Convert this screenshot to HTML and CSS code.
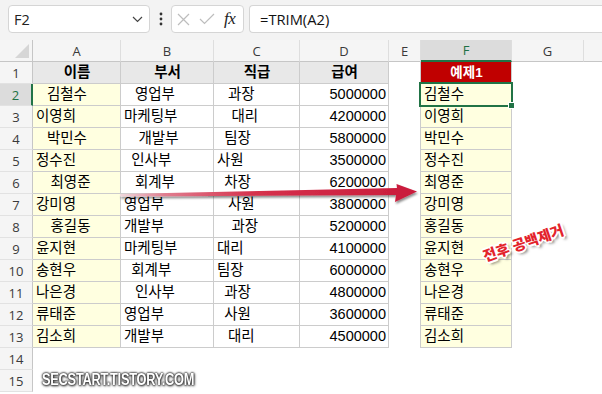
FILE: index.html
```html
<!DOCTYPE html>
<html lang="ko">
<head>
  <meta charset="UTF-8">
  <meta name="viewport" content="width=device-width, initial-scale=1">
  <title>TRIM 함수 예제</title>
  <link rel="stylesheet" href="styles.css">
</head>
<body>
  <!-- 이름 상자 + 수식 입력줄 -->
  <div class="toolbar">
    <div class="namebox">
      <span>F2</span>
      <svg width="11" height="7" viewBox="0 0 11 7"><path d="M1 1 L5.5 5.5 L10 1" fill="none" stroke="#444" stroke-width="1.2"/></svg>
    </div>
    <div class="dots">
      <svg width="4" height="14" viewBox="0 0 4 14"><circle cx="2" cy="2" r="1.4"/><circle cx="2" cy="7" r="1.4"/><circle cx="2" cy="12" r="1.4"/></svg>
    </div>
    <div class="fxbox">
      <svg class="ic-x" width="13" height="13" viewBox="0 0 13 13"><path d="M1 1 L12 12 M12 1 L1 12" stroke="#bdbdbd" stroke-width="1.2"/></svg>
      <svg class="ic-ok" width="16" height="12" viewBox="0 0 16 12"><path d="M1 6 L5.5 10.5 L15 1" fill="none" stroke="#bdbdbd" stroke-width="1.2"/></svg>
      <span class="fx">fx</span>
    </div>
    <div class="formula">=TRIM(A2)</div>
  </div>

  <!-- 시트 -->
  <div class="sheet" id="sheet">
    <div class="corner"></div>
    <div class="ch">A</div>
    <div class="ch">B</div>
    <div class="ch">C</div>
    <div class="ch">D</div>
    <div class="ch">E</div>
    <div class="ch on">F</div>
    <div class="ch">G</div>
    <div class="ch last"></div>

    <div class="rh">1</div>
    <div class="c b th">이름</div>
    <div class="c b th">부서</div>
    <div class="c b th">직급</div>
    <div class="c b th">급여</div>
    <div class="c e"></div>
    <div class="c f red">예제1</div>
    <div class="c"></div>
    <div class="c"></div>
  </div>

  <!-- 화살표, 메모, 워터마크 -->
  <svg class="overlay" width="602" height="394" viewBox="0 0 602 394">
    <defs>
      <linearGradient id="flecha" x1="120" y1="0" x2="418" y2="0" gradientUnits="userSpaceOnUse">
        <stop offset="0" stop-color="#efd9dd"/>
        <stop offset="0.15" stop-color="#e07d8f"/>
        <stop offset="0.45" stop-color="#d5314c"/>
        <stop offset="1" stop-color="#c91b3b"/>
      </linearGradient>
      <filter id="sombra" x="-5%" y="-50%" width="110%" height="200%">
        <feDropShadow dx="1" dy="2" stdDeviation="1.2" flood-color="#000" flood-opacity="0.45"/>
      </filter>
    </defs>
    <polygon points="120,194 397,188 396.5,184 417,191.5 395,202 396,195 120,196.5" fill="url(#flecha)" filter="url(#sombra)"/>
  </svg>
  <div class="note">전후 공백제거</div>
  <div class="mark">SECSTART.TISTORY.COM</div>

  <script>
    // 앞뒤에 공백이 섞인 원본 데이터
    const datos = [
      ["   김철수", "   영업부", "   과장", 5000000],
      ["이영희", "마케팅부", "    대리", 4200000],
      ["   박민수", "    개발부", "  팀장", 5800000],
      ["정수진", "  인사부", "사원", 3500000],
      ["    최영준", "   회계부", "  차장", 6200000],
      ["강미영", "영업부", "   사원", 3800000],
      ["    홍길동", "개발부", "    과장", 5200000],
      ["윤지현", "마케팅부", "대리", 4100000],
      ["송현우", "  회계부", "팀장", 6000000],
      ["나은경", "   인사부", "  과장", 4800000],
      ["류태준", "영업부", "  사원", 3600000],
      ["김소희", "개발부", "   대리", 4500000]
    ];

    const sheet = document.getElementById("sheet");

    datos.forEach((r, i) => {
      const n = i + 2;
      const on = n === 2;
      sheet.insertAdjacentHTML("beforeend",
        `<div class="rh${on ? " on" : ""}">${n}</div>` +
        `<div class="c b y">${r[0]}</div>` +
        `<div class="c b">${r[1]}</div>` +
        `<div class="c b">${r[2]}</div>` +
        `<div class="c b num">${r[3]}</div>` +
        `<div class="c e"></div>` +
        `<div class="c f y${on ? " sel" : ""}">${r[0].trim()}</div>` +
        `<div class="c"></div><div class="c"></div>`);
    });

    // 빈 행
    for (let n = 14; n <= 15; n++) {
      sheet.insertAdjacentHTML("beforeend",
        `<div class="rh">${n}</div>` + `<div class="c"></div>`.repeat(8));
    }
  </script>
</body>
</html>
```

FILE: styles.css
```css
/* ----- 기본 ----- */
html, body {
  height: 394px;
  overflow: hidden;
}

body {
  margin: 0;
  background: #f3f3f3;
  font-family: "Liberation Sans", "Noto Sans CJK KR", sans-serif;
  color: #000;
  position: relative;
}

/* ----- 수식 입력줄 ----- */
.toolbar {
  display: flex;
  align-items: center;
  height: 40px;
  box-sizing: border-box;
  padding: 5px 0 7px 8px;
}

.namebox, .fxbox, .formula {
  height: 28px;
  box-sizing: border-box;
  background: #fff;
  border: 1px solid #d5d5d5;
  border-radius: 4px;
  display: flex;
  align-items: center;
}

.namebox {
  width: 142px;
  justify-content: space-between;
  padding: 0 6px 0 5px;
  font: 14.5px "Open Sans", sans-serif;
  color: #222;
}

.dots {
  width: 21px;
  display: flex;
  justify-content: center;
  fill: #333;
}

.fxbox {
  width: 73px;
  padding-left: 5px;
}

.ic-x { margin-right: 9px; }
.ic-ok { margin-right: 9px; }

.fx {
  font: italic 17px "Liberation Serif", serif;
  color: #222;
  letter-spacing: -0.5px;
}

.formula {
  flex: 1;
  margin-left: 5px;
  border-right: none;
  border-radius: 4px 0 0 4px;
  padding-left: 10px;
  font: 14.7px "Open Sans", sans-serif;
  color: #111;
}

/* ----- 시트 ----- */
.sheet {
  display: grid;
  grid-template-columns: 33px 88px 93px 86px 89px 32px 91px 72px 1fr;
  grid-auto-rows: 22px;
  background: #fff;
  height: 354px;
}

.sheet > div {
  box-sizing: border-box;
}

.corner, .ch, .rh {
  background: #f5f5f5;
  font: 13px "Open Sans", sans-serif;
  color: #3a3a3a;
  display: flex;
  align-items: center;
  justify-content: center;
}

.corner {
  border-right: 1px solid #c6c6c6;
  border-bottom: 1px solid #c6c6c6;
  position: relative;
}

.corner::after {
  content: "";
  position: absolute;
  right: 3px;
  bottom: 3px;
  border-left: 14px solid transparent;
  border-bottom: 14px solid #d6d6d6;
}

.ch {
  border-right: 1px solid #dedede;
  border-bottom: 1px solid #c6c6c6;
}

.ch.last { border-right: none; }

.ch.on {
  background: #dcdcdc;
  color: #1e7145;
  border-bottom: 2px solid #217346;
}

.rh {
  border-right: 1px solid #c6c6c6;
  border-bottom: 1px solid #e2e2e2;
}

.rh.on {
  background: #dcdcdc;
  color: #1e7145;
  border-right: 2px solid #217346;
}

/* ----- 셀 ----- */
.c {
  font-size: 14.5px;
  line-height: 21px;
  padding: 0 2px 0 3px;
  white-space: pre;
  word-spacing: -0.4px;
  overflow: hidden;
}

.b {
  border-right: 1px solid #cccccc;
  border-bottom: 1px solid #cccccc;
}

.y { background: #ffffe0; }

.th {
  background: #e8e8e8;
  font-weight: bold;
  text-align: center;
}

.num { text-align: right; }

/* F열 표의 왼쪽 선 (E열 오른쪽 선과 공유) */
.e { border-right: 1px solid #cccccc; }

.f {
  border-right: 1px solid #cccccc;
  border-bottom: 1px solid #cccccc;
}

.red {
  background: #c00000;
  color: #fff;
  font-weight: bold;
  font-size: 13.5px;
  text-align: center;
}

/* 선택된 셀 */
.sel {
  position: relative;
  z-index: 2;
  overflow: visible;
}

.sel::after {
  content: "";
  position: absolute;
  inset: -2px;
  border: 2px solid #217346;
}

.sel::before {
  content: "";
  position: absolute;
  right: -3px;
  bottom: -3px;
  width: 5px;
  height: 5px;
  background: #217346;
  box-shadow: 0 0 0 1px #fff;
  z-index: 1;
}

/* ----- 위에 얹힌 요소 ----- */
.overlay {
  position: absolute;
  left: 0;
  top: 0;
  pointer-events: none;
}

.note {
  position: absolute;
  left: 523px;
  top: 242px;
  transform: translate(-50%, -50%) rotate(-19deg);
  font: 900 14.5px "Noto Sans CJK KR", sans-serif;
  color: #e3232b;
  white-space: nowrap;
  text-shadow:
    -1px -1px 0 #fff, 1px -1px 0 #fff, -1px 1px 0 #fff, 1px 1px 0 #fff,
    0 -2px 0 #fff, 0 2px 0 #fff, -2px 0 0 #fff, 2px 0 0 #fff,
    2px 3px 3px rgba(0, 0, 0, 0.6);
}

.mark {
  position: absolute;
  left: 42px;
  top: 371px;
  font: bold 16px "Liberation Sans", sans-serif;
  color: #fff;
  letter-spacing: -0.3px;
  white-space: nowrap;
  transform: scaleX(0.8);
  transform-origin: left center;
  text-shadow:
    0 0 2px #333, 0 0 2px #333, 0 0 3px #444, 1px 1px 3px #444;
}
```
